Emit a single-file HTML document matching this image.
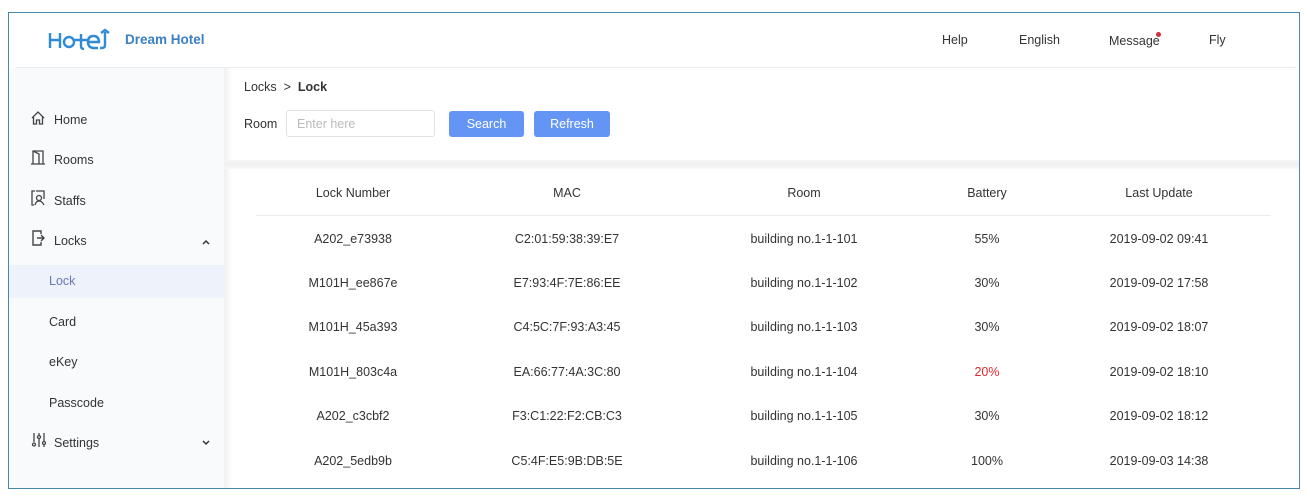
<!DOCTYPE html>
<html><head><meta charset="utf-8"><style>
*{margin:0;padding:0;box-sizing:border-box}
body{width:1310px;height:497px;background:#fff;font-family:"Liberation Sans",sans-serif;color:#333;font-size:12.5px;position:relative;overflow:hidden}
.frame{position:absolute;left:8px;top:12px;width:1292px;height:477px;border:1px solid #4a86a8;background:#fff}
.hline{position:absolute;left:16px;top:67px;width:1280px;height:1px;background:#e8ecf0}
.abs{position:absolute;white-space:nowrap}
.side{position:absolute;left:9px;top:68px;width:215px;height:420px;background:#f8fafc}
.shadowcol{position:absolute;left:224px;top:68px;width:8px;height:420px;background:linear-gradient(90deg,#eef0f3,#fff)}
.band{position:absolute;left:224px;top:160px;width:1075px;height:9px;background:linear-gradient(#f6f6f6,#efefef,#f9f9f9)}
.nav{position:absolute;left:54px;font-size:12.5px;color:#333}
.sub{position:absolute;left:49px;font-size:12.5px;color:#333}
.btn{position:absolute;top:111px;height:26px;background:#6495f4;color:#fff;border-radius:3px;text-align:center;line-height:26px;font-size:12.5px}
.th,.td{position:absolute;transform:translateX(-50%);white-space:nowrap;font-size:12.5px}
</style></head><body>
<div class="frame"></div>
<div class="hline"></div>
<svg class="abs" style="left:48px;top:27px" width="64" height="24" viewBox="0 0 64 24" fill="none" stroke="#2f8bd6" stroke-width="2.4">
<path d="M2 6v15M2 13h10M12 6v15"/><circle cx="21" cy="15" r="5"/><path d="M26 13h14M33 7v12q0 3 3 3"/><path d="M40 15h11q0-6-5.5-6t-5.5 6q0 6 6 6h4"/><path d="M53 6l4-3 4 3M57 5v13q0 3-3 3h-2"/>
</svg>
<div class="abs" style="left:125px;top:32px;font-size:13.5px;font-weight:bold;color:#3b7fc4">Dream Hotel</div>
<div class="abs" style="left:942px;top:33px">Help</div>
<div class="abs" style="left:1019px;top:33px">English</div>
<div class="abs" style="left:1109px;top:34px">Message</div>
<div class="abs" style="left:1156px;top:32px;width:5px;height:5px;border-radius:50%;background:#d0303a"></div>
<div class="abs" style="left:1209px;top:33px">Fly</div>

<div class="side"></div>
<div class="shadowcol"></div>
<div class="abs" style="left:9px;top:265px;width:215px;height:33px;background:#edf2fb"></div>

<svg class="abs" style="left:30px;top:110px" width="16" height="16" viewBox="0 0 16 16" fill="none" stroke="#444" stroke-width="1.3"><path d="M2 8L8 2l6 6M3.5 7v7h3v-4h3v4h3V7"/></svg>
<div class="nav" style="top:113px">Home</div>
<svg class="abs" style="left:30px;top:149px" width="16" height="16" viewBox="0 0 16 16" fill="none" stroke="#444" stroke-width="1.3"><path d="M1 15h14M3 15V2h10v13M3 2l6 3v10"/></svg>
<div class="nav" style="top:153px">Rooms</div>
<svg class="abs" style="left:30px;top:190px" width="16" height="16" viewBox="0 0 16 16" fill="none" stroke="#444" stroke-width="1.3"><path d="M5 1H2v14h2M6 1h8v8"/><circle cx="9" cy="8" r="2.5"/><path d="M5 15q1-4 4-4t5 4"/></svg>
<div class="nav" style="top:194px">Staffs</div>
<svg class="abs" style="left:30px;top:230px" width="16" height="16" viewBox="0 0 16 16" fill="none" stroke="#444" stroke-width="1.4"><path d="M11 4V1H3v14h8v-3M7 8h7M11 5l3 3-3 3"/></svg>
<div class="nav" style="top:234px">Locks</div>
<svg class="abs" style="left:202px;top:239px" width="8" height="6" viewBox="0 0 8 6" fill="none" stroke="#333" stroke-width="1.5"><path d="M1 5l3-3 3 3"/></svg>
<div class="sub" style="top:274px;color:#6a78b8">Lock</div>
<div class="sub" style="top:315px">Card</div>
<div class="sub" style="top:355px">eKey</div>
<div class="sub" style="top:396px">Passcode</div>
<svg class="abs" style="left:31px;top:432px" width="16" height="16" viewBox="0 0 16 16" fill="none" stroke="#444" stroke-width="1.3"><path d="M3 1v9M8 1v2M8 7v8M13 1v8M13 13v2"/><circle cx="3" cy="12.5" r="1.5"/><circle cx="8" cy="5" r="1.5"/><circle cx="13" cy="11" r="1.5"/></svg>
<div class="nav" style="top:436px">Settings</div>
<svg class="abs" style="left:202px;top:440px" width="8" height="6" viewBox="0 0 8 6" fill="none" stroke="#333" stroke-width="1.5"><path d="M1 1l3 3 3-3"/></svg>

<div class="abs" style="left:244px;top:80px">Locks &nbsp;&gt;&nbsp; <b>Lock</b></div>
<div class="abs" style="left:244px;top:117px">Room</div>
<div class="abs" style="left:286px;top:110px;width:149px;height:27px;border:1px solid #dfe2e6;border-radius:3px;color:#bbb;padding:6px 10px">Enter here</div>
<div class="btn" style="left:449px;width:75px">Search</div>
<div class="btn" style="left:534px;width:76px">Refresh</div>
<div class="band"></div>

<div class="th" style="left:353px;top:186px">Lock Number</div>
<div class="th" style="left:567px;top:186px">MAC</div>
<div class="th" style="left:804px;top:186px">Room</div>
<div class="th" style="left:987px;top:186px">Battery</div>
<div class="th" style="left:1159px;top:186px">Last Update</div>
<div class="abs" style="left:256px;top:215px;width:1015px;height:1px;background:#ebebeb"></div>

<div class="td" style="left:353px;top:232px">A202_e73938</div><div class="td" style="left:567px;top:232px">C2:01:59:38:39:E7</div><div class="td" style="left:804px;top:232px">building no.1-1-101</div><div class="td" style="left:987px;top:232px">55%</div><div class="td" style="left:1159px;top:232px">2019-09-02 09:41</div>
<div class="td" style="left:353px;top:276px">M101H_ee867e</div><div class="td" style="left:567px;top:276px">E7:93:4F:7E:86:EE</div><div class="td" style="left:804px;top:276px">building no.1-1-102</div><div class="td" style="left:987px;top:276px">30%</div><div class="td" style="left:1159px;top:276px">2019-09-02 17:58</div>
<div class="td" style="left:353px;top:320px">M101H_45a393</div><div class="td" style="left:567px;top:320px">C4:5C:7F:93:A3:45</div><div class="td" style="left:804px;top:320px">building no.1-1-103</div><div class="td" style="left:987px;top:320px">30%</div><div class="td" style="left:1159px;top:320px">2019-09-02 18:07</div>
<div class="td" style="left:353px;top:365px">M101H_803c4a</div><div class="td" style="left:567px;top:365px">EA:66:77:4A:3C:80</div><div class="td" style="left:804px;top:365px">building no.1-1-104</div><div class="td" style="left:987px;top:365px;color:#e0282e">20%</div><div class="td" style="left:1159px;top:365px">2019-09-02 18:10</div>
<div class="td" style="left:353px;top:409px">A202_c3cbf2</div><div class="td" style="left:567px;top:409px">F3:C1:22:F2:CB:C3</div><div class="td" style="left:804px;top:409px">building no.1-1-105</div><div class="td" style="left:987px;top:409px">30%</div><div class="td" style="left:1159px;top:409px">2019-09-02 18:12</div>
<div class="td" style="left:353px;top:454px">A202_5edb9b</div><div class="td" style="left:567px;top:454px">C5:4F:E5:9B:DB:5E</div><div class="td" style="left:804px;top:454px">building no.1-1-106</div><div class="td" style="left:987px;top:454px">100%</div><div class="td" style="left:1159px;top:454px">2019-09-03 14:38</div>
</body></html>
